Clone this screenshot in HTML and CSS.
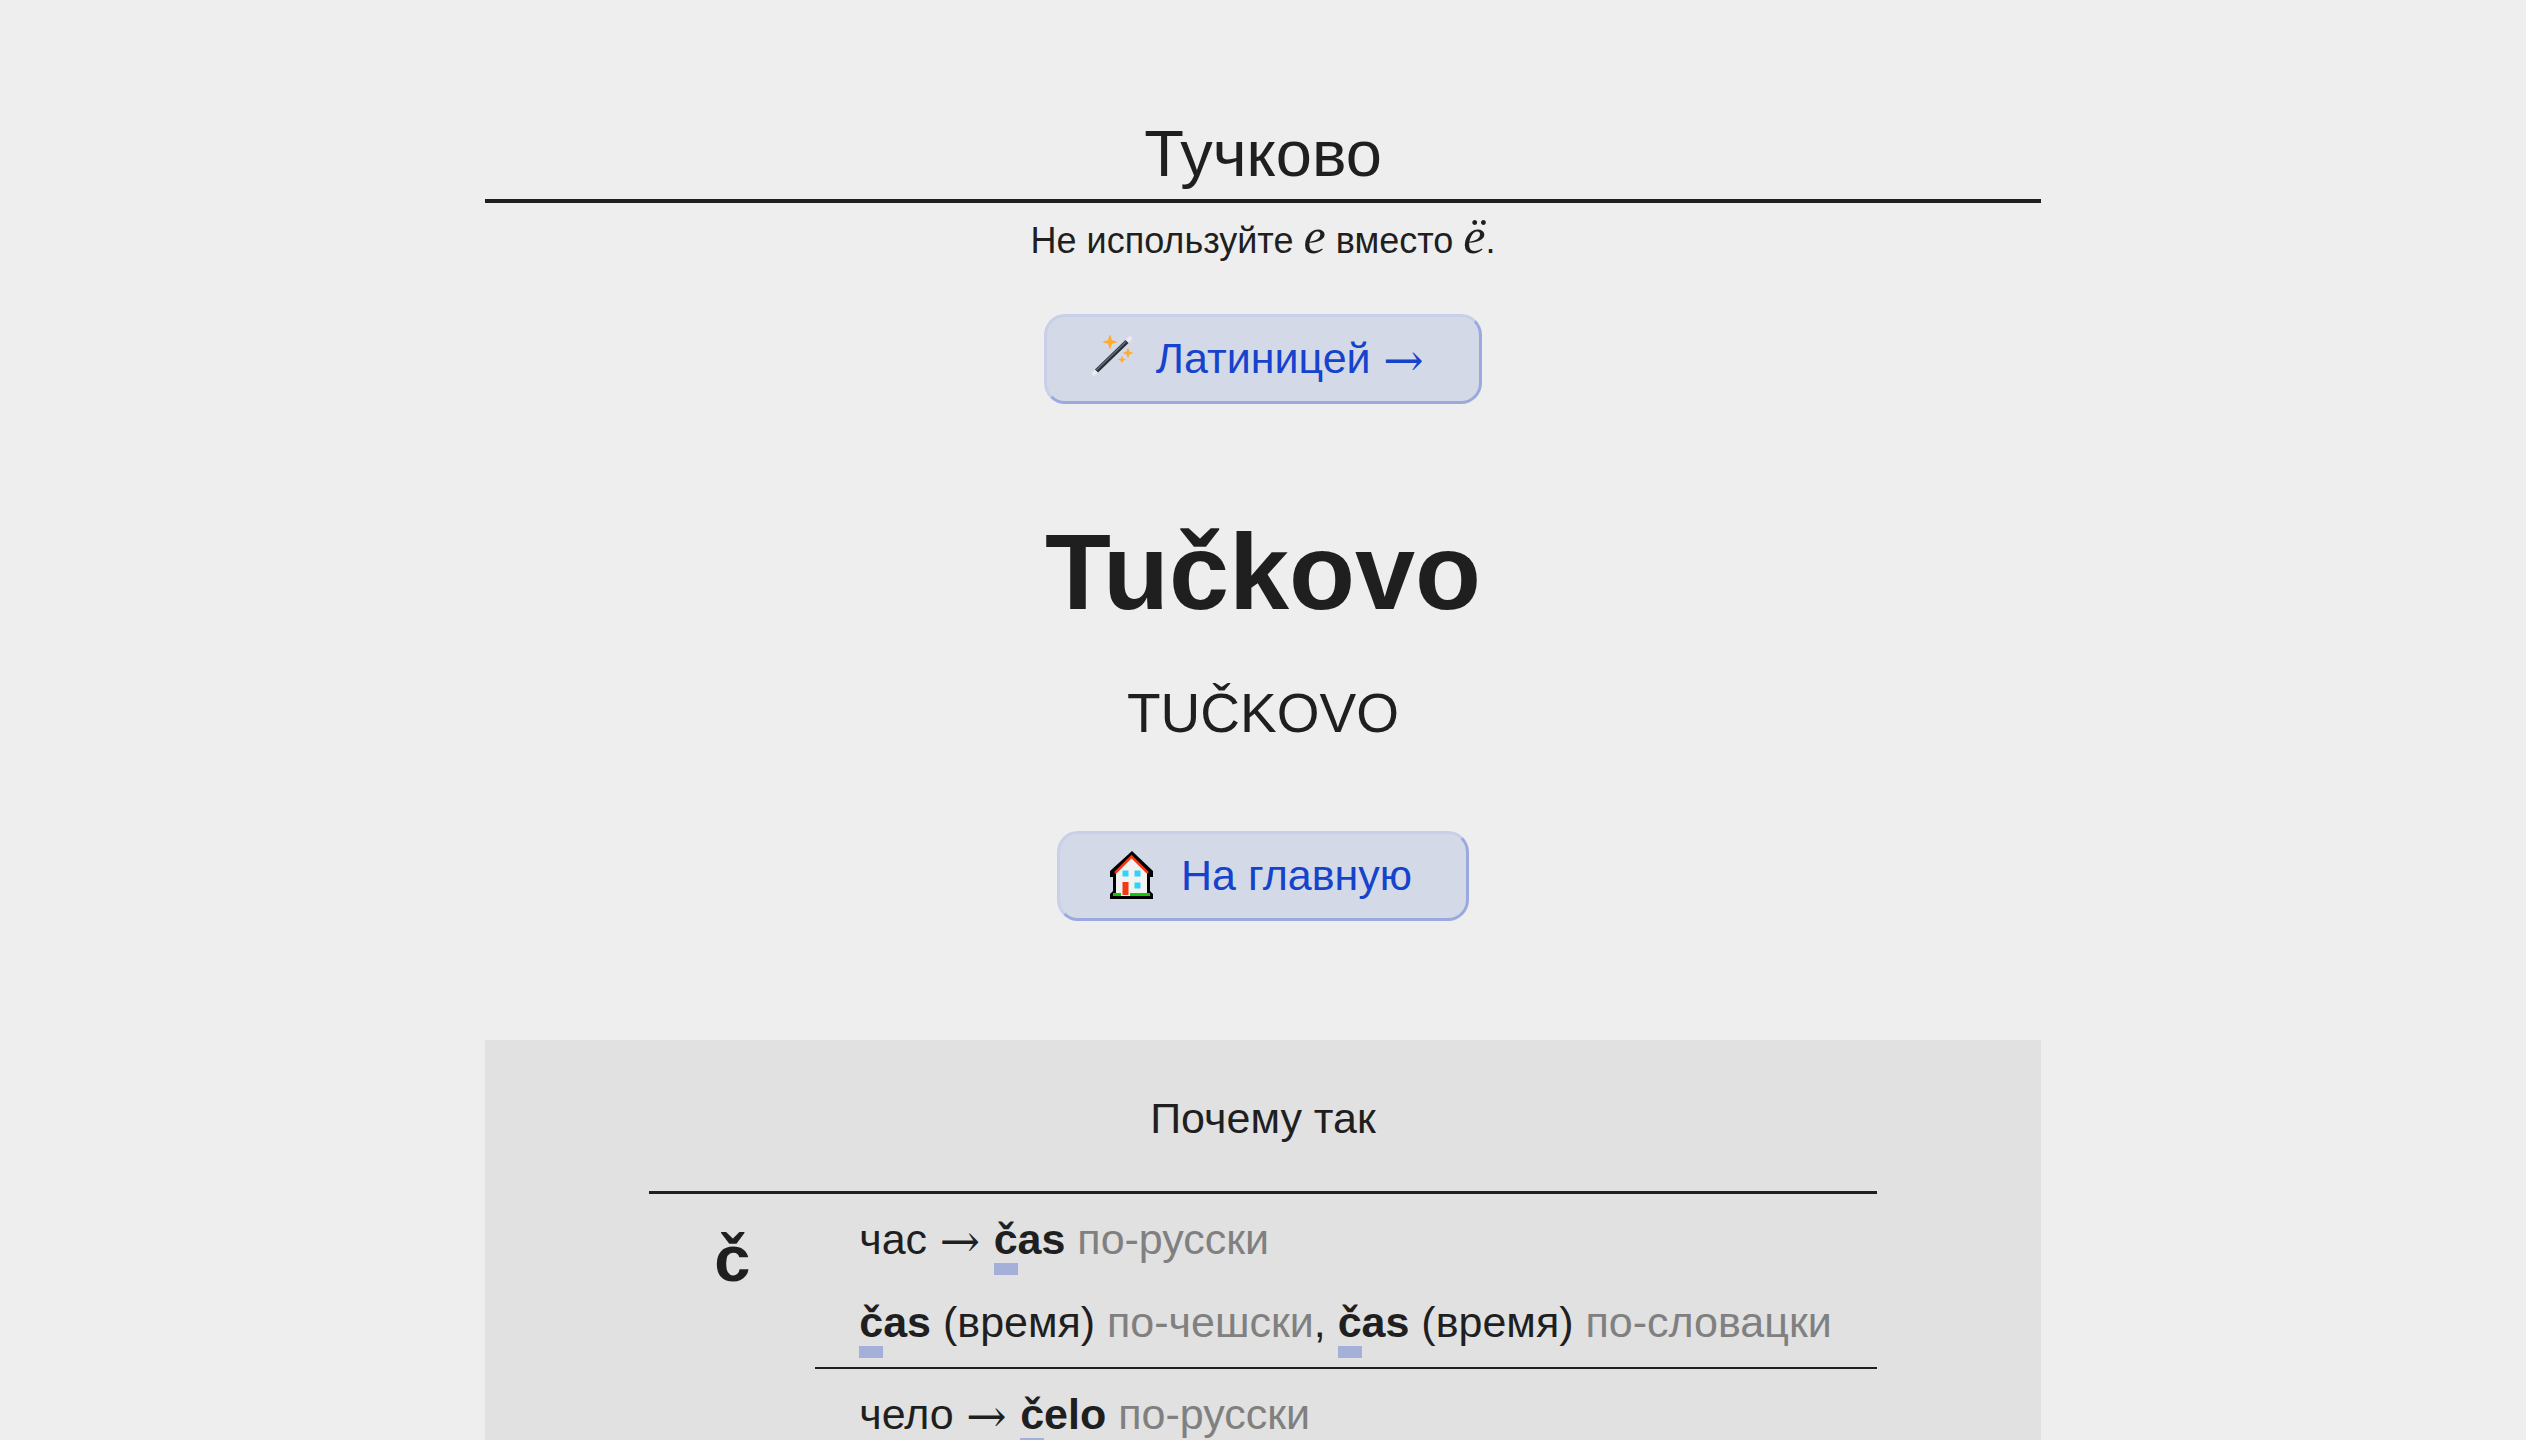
FILE: index.html
```html
<!DOCTYPE html>
<html lang="ru">
<head>
<meta charset="utf-8">
<meta name="viewport" content="width=device-width, initial-scale=1">
<title>Тучково — Tučkovo</title>
<link rel="stylesheet" href="styles.css">
</head>
<body>
<main class="page">
  <header class="source">
    <h1 class="source-name">Тучково</h1>
    <p class="hint">Не используйте <em class="letter">е</em> вместо <em class="letter">ё</em>.</p>
  </header>

  <a class="button" href="#latin">
    <svg class="icon" viewBox="0 0 44 48" aria-hidden="true">
      <path d="M3 39.500 39 4.500" stroke="#e8eaf0" stroke-width="4.500" stroke-linecap="round"/>
      <path d="M5.500 37 36 7.500" stroke="#292f33" stroke-width="4.500"/>
      <path d="M5.500 36 35 7.500" stroke="#66757f" stroke-width="1.200"/>
      <g fill="#ffac33">
        <path d="M19 1c1 0 1.300 4.200 2 5s5 1 5 2-4.200 1.300-5 2-1 5-2 5-1.300-4.200-2-5-5-1-5-2 4.200-1.300 5-2 1-5 2-5z"/>
        <path d="M37 14c.8 0 1 3 1.500 3.500S42 18.200 42 19s-3 1-3.500 1.500S37.800 24 37 24s-1-3-1.500-3.500S32 19.800 32 19s3-1 3.500-1.500S36.200 14 37 14z"/>
        <path d="M31 22c.6 0 .8 2.100 1.200 2.500S35 25 35 25.500s-2.400.8-2.800 1.200S31.600 29 31 29s-.8-1.900-1.200-2.300S27 26 27 25.500s2.400-.6 2.800-1S30.400 22 31 22z"/>
      </g>
    </svg>
    <span>Латиницей <span class="arrow">→</span></span>
  </a>

  <section class="result" id="latin">
    <p class="latin">Tučkovo</p>
    <p class="latin-caps">TUČKOVO</p>
  </section>

  <a class="button" href="#home">
    <svg class="icon icon-house" viewBox="0 0 44 48" aria-hidden="true">
      <path d="M22 0 43 20v6h-3v14l3 3v5H0v-5l3-3V26H0v-6z" fill="#000"/>
      <path d="M21.500 6 37 21.500V42H6V21.500z" fill="#f2f2f2"/>
      <path d="M5 22 21.500 5.500 38 22" fill="none" stroke="#f03a17" stroke-width="2.500"/>
      <path d="M3 42h8v3H3zM20 42h20v3H20z" fill="#16c60c"/>
      <path d="M11 42h9v3h-9z" fill="#f2f2f2"/>
      <path d="M12.500 31h6v13h-6z" fill="#f03a17"/>
      <path d="M12.500 19.500h6v6h-6zM24.500 19.500h6v6h-6zM24.500 31.500h6v6h-6z" fill="#31d2f7"/>
    </svg>
    <span>На главную</span>
  </a>

  <section class="card">
    <h2 class="card-title">Почему так</h2>
    <table class="examples">
      <tr>
        <th class="sound" rowspan="2" scope="rowgroup">č</th>
        <td class="example">
          <p>час <span class="arrow">→</span> <b><span class="mark">č</span>as</b> <span class="lang">по-русски</span></p>
          <p><b><span class="mark">č</span>as</b> (время) <span class="lang">по-чешски</span>, <b><span class="mark">č</span>as</b> (время) <span class="lang">по-словацки</span></p>
        </td>
      </tr>
      <tr>
        <td class="example">
          <p>чело <span class="arrow">→</span> <b><span class="mark">č</span>elo</b> <span class="lang">по-русски</span></p>
        </td>
      </tr>
    </table>
  </section>
</main>
</body>
</html>
```
FILE: styles.css
```css
* { box-sizing: border-box; }

body {
  margin: 0;
  background: #eee;
  color: #1f1f1f;
  font: 43px/60px "Liberation Sans", Arial, sans-serif;
}

h1, h2, p { margin: 0; font-weight: normal; }

.page {
  display: flex;
  flex-direction: column;
  align-items: center;
  max-width: 1556px;
  margin: 0 auto;
  padding-top: 115px;
}

.source { align-self: stretch; text-align: center; }

.source-name {
  padding-bottom: 6px;
  border-bottom: 4px solid #1f1f1f;
  font-size: 65px;
  line-height: 78px;
}

.hint { margin: 8px 0 43px; font-size: 36px; }

.letter {
  font: italic 50px/50px "Liberation Serif", "Times New Roman", serif;
}

.button {
  display: flex;
  align-items: center;
  gap: 21px;
  padding: 0 54px 2px 44px;
  border: 3px solid;
  border-color: #c9cfe8 #9aaade #9aaade #c9cfe8;
  border-radius: 21px;
  background: #d4d9e8;
  color: #1643cc;
  line-height: 82px;
  text-decoration: none;
}

.icon { width: 44px; height: 48px; fill: none; }

.icon-house { margin: 0 6px; }

.arrow { font-family: "DejaVu Math TeX Gyre", "Noto Sans CJK JP", sans-serif; line-height: 1; }

.result { padding: 103px 0 85px; text-align: center; }

.latin { font-size: 108px; font-weight: bold; line-height: 130px; }

.latin-caps { margin-top: 43px; font-size: 55px; line-height: 66px; }

.card {
  align-self: stretch;
  margin-top: 119px;
  padding: 48px 0;
  background: #e1e1e1;
}

.card-title { font-size: 43px; text-align: center; }

.examples {
  margin: 43px auto 0;
  border-top: 3px solid #1f1f1f;
  border-spacing: 0;
}

.sound {
  width: 166px;
  padding: 26px 0 0;
  font-size: 65px;
  line-height: 78px;
  vertical-align: top;
}

.example { padding: 4px 45px 3px 44px; line-height: 83px; }

tr + tr .example { border-top: 2px solid #1f1f1f; }

.mark { border-bottom: 12px solid #a5b0da; }

.lang { color: #808080; }
```
